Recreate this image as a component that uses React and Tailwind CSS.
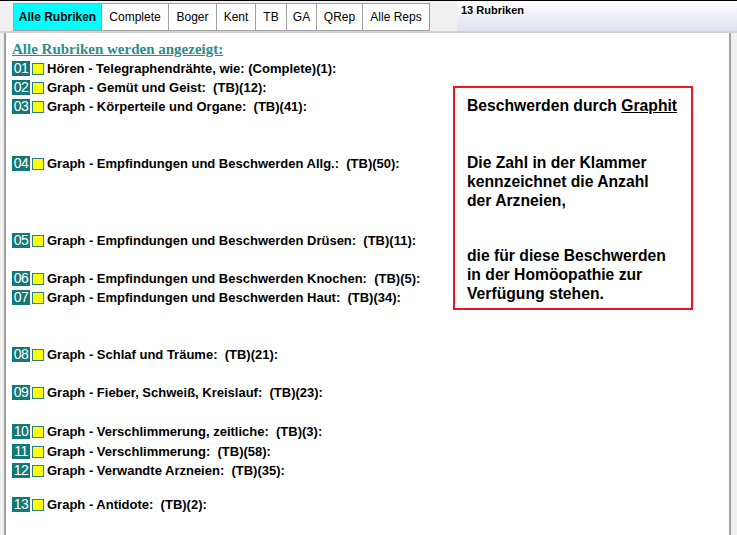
const tabs = [
  { label: 'Alle Rubriken', w: 'w-[89px]', active: true },
  { label: 'Complete', w: 'w-[67px]' },
  { label: 'Boger', w: 'w-[48px]' },
  { label: 'Kent', w: 'w-[39px]' },
  { label: 'TB', w: 'w-[31px]' },
  { label: 'GA', w: 'w-[30px]' },
  { label: 'QRep', w: 'w-[46px]' },
  { label: 'Alle Reps', w: 'w-[67px]' },
];

const rubrics = [
  { n: '01', text: 'Hören - Telegraphendrähte, wie: (Complete)(1):', mt: '' },
  { n: '02', text: 'Graph - Gemüt und Geist:  (TB)(12):', mt: '' },
  { n: '03', text: 'Graph - Körperteile und Organe:  (TB)(41):', mt: '' },
  { n: '04', text: 'Graph - Empfindungen und Beschwerden Allg.:  (TB)(50):', mt: 'mt-[38px]' },
  { n: '05', text: 'Graph - Empfindungen und Beschwerden Drüsen:  (TB)(11):', mt: 'mt-[58px]' },
  { n: '06', text: 'Graph - Empfindungen und Beschwerden Knochen:  (TB)(5):', mt: 'mt-[19px]' },
  { n: '07', text: 'Graph - Empfindungen und Beschwerden Haut:  (TB)(34):', mt: '' },
  { n: '08', text: 'Graph - Schlaf und Träume:  (TB)(21):', mt: 'mt-[38px]' },
  { n: '09', text: 'Graph - Fieber, Schweiß, Kreislauf:  (TB)(23):', mt: 'mt-[19px]' },
  { n: '10', text: 'Graph - Verschlimmerung, zeitliche:  (TB)(3):', mt: 'mt-[20px]' },
  { n: '11', text: 'Graph - Verschlimmerung:  (TB)(58):', mt: 'mt-[1px]' },
  { n: '12', text: 'Graph - Verwandte Arzneien:  (TB)(35):', mt: '' },
  { n: '13', text: 'Graph - Antidote:  (TB)(2):', mt: 'mt-[15px]' },
];

function Row({ n, text, mt }) {
  return (
    <div className={`flex items-center h-[19px] ${mt}`}>
      <div className="w-[18px] h-[15px] bg-[#127878] text-white text-[14px] leading-[15px] text-center tracking-[-0.5px]">
        {n}
      </div>
      <div className="ml-[2px] w-[12px] h-[12px] border border-[#2a8080] bg-[#ffff00]" />
      <div className="ml-[3px] text-[13px] font-bold text-black whitespace-pre">{text}</div>
    </div>
  );
}

export default function App() {
  return (
    <div className="w-[737px] h-[535px] bg-[#f0f0f0] overflow-hidden flex flex-col font-['Liberation_Sans',Arial,sans-serif]">
      <div className="h-px bg-black shrink-0" />

      {/* tab strip */}
      <div className="flex h-[30px] shrink-0">
        <div className="w-[13px]" />
        {tabs.map((t, i) => (
          <div
            key={t.label}
            className={`${t.w} mt-[2px] h-[28px] border border-[#a0a0a0] ${i > 0 ? 'border-l-0' : ''} flex items-center justify-center text-[12px] text-black ${
              t.active ? 'bg-[#00ffff] font-bold' : 'bg-white'
            }`}
          >
            {t.label}
          </div>
        ))}
        <div className="w-[27px]" />
        <div className="flex-1 bg-gradient-to-b from-white to-[#dfe0ee] pl-[4px] pt-[3px] text-[11px] font-bold leading-[13px] text-black">
          13 Rubriken
        </div>
      </div>
      <div className="h-[2px] bg-[#d4d4d4] shrink-0" />

      {/* content panel */}
      <div className="ml-[4px] w-[727px] flex-1 bg-white border-l-2 border-r-2 border-[#a0a0a0] flex pl-[6px] pt-[8px]">
        <div className="w-[441px] shrink-0">
          <div className="font-['Liberation_Serif','Times_New_Roman',serif] font-bold text-[15px] leading-[17px] text-[#2e8b8b] underline">
            Alle Rubriken werden angezeigt:
          </div>
          <div className="mt-[1px]">
            {rubrics.map((r) => (
              <Row key={r.n} {...r} />
            ))}
          </div>
        </div>

        <div className="mt-[45px] w-[240px] h-[224px] border-2 border-[#ec1520] pl-[12px] pt-[8px] text-[15.7px] leading-[19px] font-bold text-black self-start">
          <div>
            Beschwerden durch <span className="underline">Graphit</span>
          </div>
          <div className="mt-[38px]">
            <div>Die Zahl in der Klammer</div>
            <div>kennzeichnet die Anzahl</div>
            <div>der Arzneien,</div>
          </div>
          <div className="mt-[36px]">
            <div>die für diese Beschwerden</div>
            <div>in der Homöopathie zur</div>
            <div>Verfügung stehen.</div>
          </div>
        </div>
      </div>
    </div>
  );
}
